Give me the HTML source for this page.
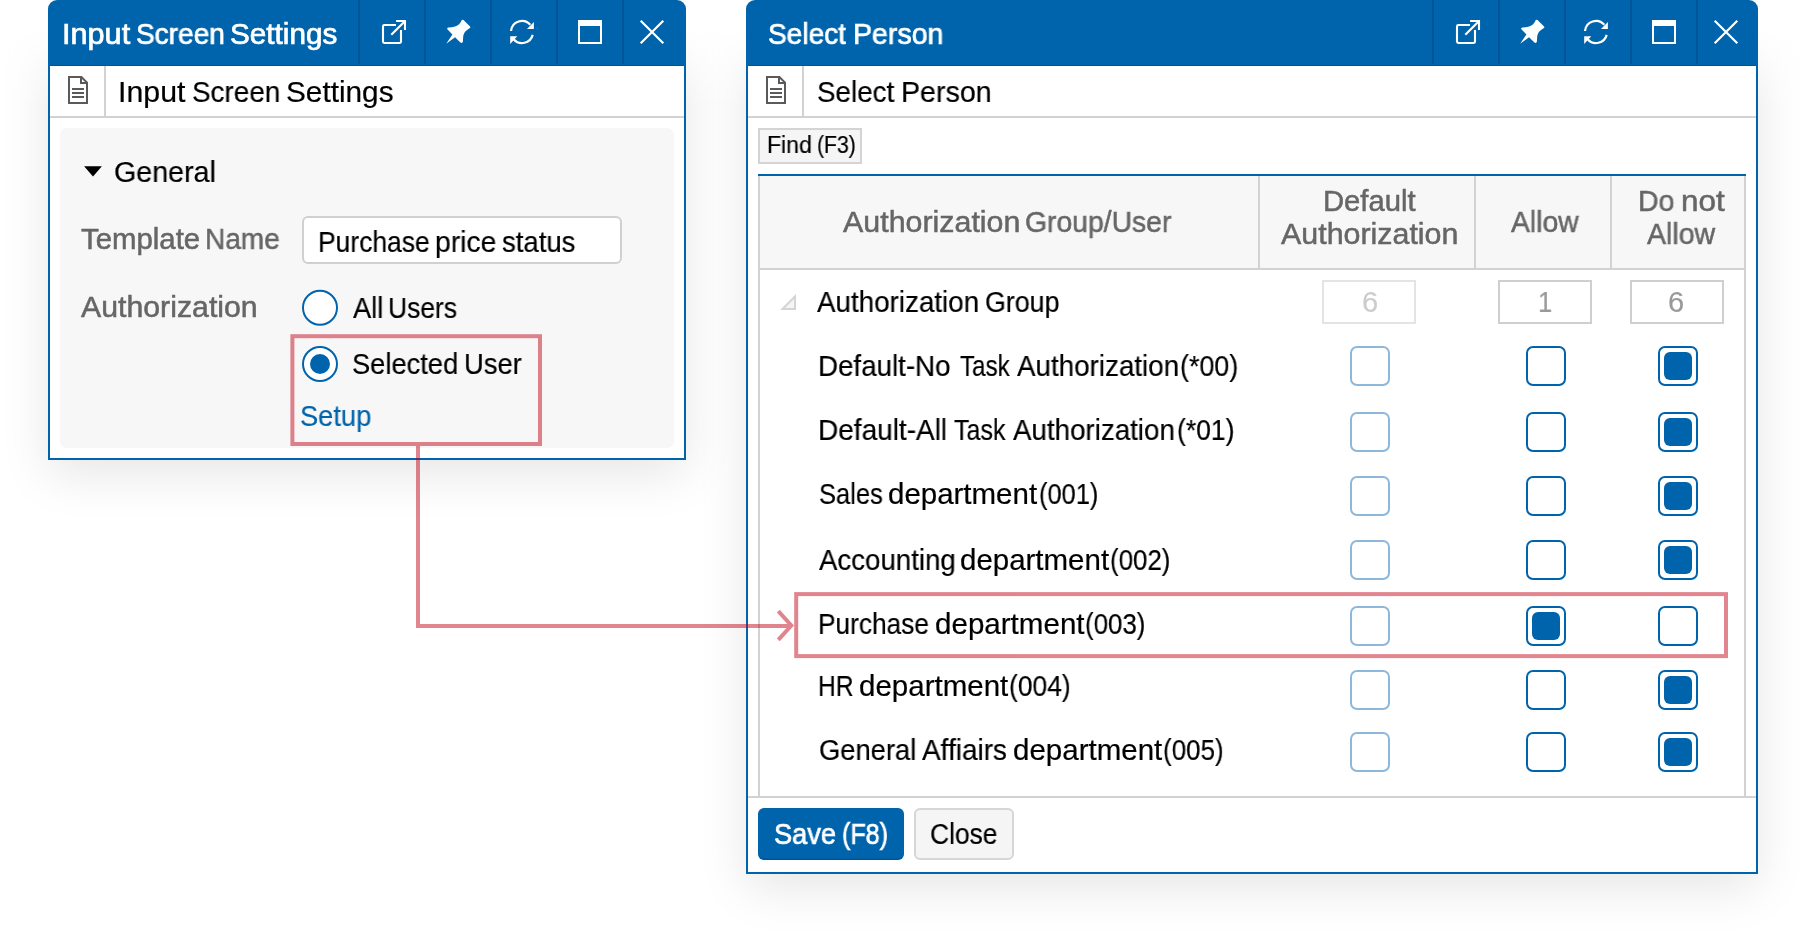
<!DOCTYPE html>
<html lang="en"><head><meta charset="utf-8"><title>Select Person</title>
<style>
html,body{margin:0;padding:0;background:#fff;}
body{width:1808px;height:933px;position:relative;overflow:hidden;font-family:"Liberation Sans", sans-serif;}
.abs,.t,.win,.win>*{position:absolute;}
.t{left:0;white-space:nowrap;}
.t span{position:absolute;top:0;display:block;transform-origin:0 0;will-change:transform;}
.win{background:#fff;border-radius:9px 9px 0 0;box-shadow:0 14px 50px rgba(0,0,0,0.103);}
.frame{left:0;top:60px;right:0;bottom:0;border:2px solid #0064ac;border-top:0;box-sizing:border-box;}
.bar{left:0;top:0;right:0;height:66px;background:#0064ac;border-radius:9px 9px 0 0;box-shadow:inset 0 -1px 0 rgba(0,0,90,0.16);}
.sep{top:0;width:2px;height:64px;background:rgba(0,30,80,0.22);}
.hline{height:2px;background:#d2d2d2;}
.vline{width:2px;background:#d2d2d2;}
svg{position:absolute;left:0;top:0;overflow:visible;}
</style></head><body>

<div class="win" style="left:48px;top:0;width:638px;height:460px;"><div class="bar"></div><div class="frame"></div>
<div class="sep" style="left:310px"></div>
<div class="sep" style="left:376px"></div>
<div class="sep" style="left:442px"></div>
<div class="sep" style="left:508px"></div>
<div class="sep" style="left:574px"></div>
<div class="hline" style="left:2px;right:2px;top:116px;"></div>
<div class="vline" style="left:56px;top:66px;height:50px;"></div>
<div style="left:12px;top:128px;width:614px;height:320px;background:#f7f7f7;border-radius:7px;"></div>
<div style="left:254px;top:216px;width:320px;height:48px;box-sizing:border-box;border:2px solid #d0d0d0;border-radius:6px;background:#fff;"></div>
</div>
<div class="win" style="left:746px;top:0;width:1012px;height:874px;"><div class="bar"></div><div class="frame"></div>
<div class="sep" style="left:686px"></div>
<div class="sep" style="left:752px"></div>
<div class="sep" style="left:818px"></div>
<div class="sep" style="left:884px"></div>
<div class="sep" style="left:950px"></div>
<div class="hline" style="left:2px;right:2px;top:116px;"></div>
<div class="vline" style="left:56px;top:66px;height:50px;"></div>
<div style="left:12px;top:128px;width:104px;height:36px;box-sizing:border-box;border:2px solid #d4d4d4;background:#f5f5f5;"></div>
<div style="left:12px;top:176px;width:988px;height:93px;background:#f7f7f7;"></div>
<div style="left:12px;top:174px;width:988px;height:2px;background:#0064ac;"></div>
<div class="hline" style="left:12px;width:988px;top:268px;"></div>
<div class="vline" style="left:12px;top:176px;height:620px;"></div>
<div class="vline" style="left:998px;top:176px;height:620px;"></div>
<div class="vline" style="left:512px;top:176px;height:92px;"></div>
<div class="vline" style="left:728px;top:176px;height:92px;"></div>
<div class="vline" style="left:864px;top:176px;height:92px;"></div>
<div style="left:576px;top:280px;width:94px;height:44px;box-sizing:border-box;border:2px solid #e4e4e4;background:#fff;"></div>
<div style="left:752px;top:280px;width:94px;height:44px;box-sizing:border-box;border:2px solid #cfcfcf;background:#fff;"></div>
<div style="left:884px;top:280px;width:94px;height:44px;box-sizing:border-box;border:2px solid #cfcfcf;background:#fff;"></div>
<div class="hline" style="left:2px;right:2px;top:796px;"></div>
<div style="left:12px;top:808px;width:146px;height:52px;background:#0064ac;border-radius:6px;box-shadow:inset 0 -1.5px 0 rgba(0,0,40,0.14);"></div>
<div style="left:168px;top:808px;width:100px;height:52px;box-sizing:border-box;border:2px solid #d6d6d6;background:#f5f5f5;border-radius:6px;"></div>
</div>
<div class="abs" style="left:0px;top:0;width:48px;height:112px;background:linear-gradient(to bottom,#fff 0,#fff 28px,rgba(255,255,255,0) 108px);"></div>
<div class="abs" style="left:686px;top:0;width:60px;height:112px;background:linear-gradient(to bottom,#fff 0,#fff 28px,rgba(255,255,255,0) 108px);"></div>
<div class="abs" style="left:1758px;top:0;width:50px;height:112px;background:linear-gradient(to bottom,#fff 0,#fff 28px,rgba(255,255,255,0) 108px);"></div>
<svg width="1808" height="933" viewBox="0 0 1808 933">
<g fill="none" stroke="#fff" stroke-width="2.1"><path d="M396,25 H384.4 a1.4,1.4 0 0 0 -1.4,1.4 V41.6 a1.4,1.4 0 0 0 1.4,1.4 H399.6 a1.4,1.4 0 0 0 1.4,-1.4 V30"/><path d="M391.3,34.7 L404.6,21.4"/><path d="M396.1,21.05 H405 V30"/></g>
<g transform="translate(446,20)"><path fill="#fff" d="M16.6,-0.2 C17.2,-0.4 17.6,0 18,0.4 L23.8,6.2 C24.4,6.8 24.6,7.4 24,8 C22.5,9 20.3,10.4 19.1,11.8 C17.6,13.8 17.2,15.6 17.1,18 L16.9,21.6 C16.8,23 15.4,23.4 14.4,22.6 L9.05,17.2 L0.2,23.7 L6.4,14.5 L1.6,9.6 C0.8,8.8 1.2,7.6 2.5,7.5 L6,7.2 C9,6.9 11,5.9 12.5,4.8 C14,3.6 14.8,2 15.4,0.8 C15.7,0.2 16,-0.1 16.6,-0.2 Z"/></g>
<g transform="translate(522,32)"><g fill="none" stroke="#fff" stroke-width="2.2"><path d="M-11,-1 A11,11 0 0 1 8.3,-7.2"/><path d="M10.7,2.9 A11,11 0 0 1 -8.3,7.2"/></g><path fill="#fff" d="M11.9,-10.1 V-3 H5 Z"/><path fill="#fff" d="M-11.8,11.9 V4.2 H-4.7 Z"/></g>
<g><rect x="579" y="21" width="22" height="22" fill="none" stroke="#fff" stroke-width="2"/><rect x="578" y="20" width="24" height="6" fill="#fff"/></g>
<path d="M640.7,20.7 L663.3,43.3 M663.3,20.7 L640.7,43.3" stroke="#fff" stroke-width="2.2" fill="none"/>
<g fill="none" stroke="#fff" stroke-width="2.1"><path d="M1470,25 H1458.4 a1.4,1.4 0 0 0 -1.4,1.4 V41.6 a1.4,1.4 0 0 0 1.4,1.4 H1473.6 a1.4,1.4 0 0 0 1.4,-1.4 V30"/><path d="M1465.3,34.7 L1478.6,21.4"/><path d="M1470.1,21.05 H1479 V30"/></g>
<g transform="translate(1520,20)"><path fill="#fff" d="M16.6,-0.2 C17.2,-0.4 17.6,0 18,0.4 L23.8,6.2 C24.4,6.8 24.6,7.4 24,8 C22.5,9 20.3,10.4 19.1,11.8 C17.6,13.8 17.2,15.6 17.1,18 L16.9,21.6 C16.8,23 15.4,23.4 14.4,22.6 L9.05,17.2 L0.2,23.7 L6.4,14.5 L1.6,9.6 C0.8,8.8 1.2,7.6 2.5,7.5 L6,7.2 C9,6.9 11,5.9 12.5,4.8 C14,3.6 14.8,2 15.4,0.8 C15.7,0.2 16,-0.1 16.6,-0.2 Z"/></g>
<g transform="translate(1596,32)"><g fill="none" stroke="#fff" stroke-width="2.2"><path d="M-11,-1 A11,11 0 0 1 8.3,-7.2"/><path d="M10.7,2.9 A11,11 0 0 1 -8.3,7.2"/></g><path fill="#fff" d="M11.9,-10.1 V-3 H5 Z"/><path fill="#fff" d="M-11.8,11.9 V4.2 H-4.7 Z"/></g>
<g><rect x="1653" y="21" width="22" height="22" fill="none" stroke="#fff" stroke-width="2"/><rect x="1652" y="20" width="24" height="6" fill="#fff"/></g>
<path d="M1714.7,20.7 L1737.3,43.3 M1737.3,20.7 L1714.7,43.3" stroke="#fff" stroke-width="2.2" fill="none"/>
<g transform="translate(68,76)" fill="none" stroke="#5a5a5a" stroke-width="2"><path d="M1,1 H13.4 L19,6.6 V27 H1 Z"/><path d="M13,1 V7 H19"/><path d="M4,13 H16 M4,17 H16 M4,21 H16"/></g>
<g transform="translate(766,76)" fill="none" stroke="#5a5a5a" stroke-width="2"><path d="M1,1 H13.4 L19,6.6 V27 H1 Z"/><path d="M13,1 V7 H19"/><path d="M4,13 H16 M4,17 H16 M4,21 H16"/></g>
<path d="M84.1,166.3 H101.9 L93,176.6 Z" fill="#000"/>
<path d="M795,296.5 V309 H782.5 Z" fill="#f5f5f5" stroke="#d4d4d4" stroke-width="2"/>
<circle cx="320" cy="307.75" r="17" fill="#fff" stroke="#0064ac" stroke-width="2"/>
<circle cx="320" cy="364" r="17" fill="#fff" stroke="#0064ac" stroke-width="2"/><circle cx="320" cy="364" r="10" fill="#0064ac"/>
<rect x="1351" y="347" width="38" height="38" rx="6" fill="#fff" stroke="#8db8dc" stroke-width="2"/>
<rect x="1527" y="347" width="38" height="38" rx="6" fill="#fff" stroke="#0064ac" stroke-width="2"/>
<rect x="1659" y="347" width="38" height="38" rx="6" fill="#fff" stroke="#0064ac" stroke-width="2"/><rect x="1664" y="352" width="28" height="28" rx="6" fill="#0064ac"/>
<rect x="1351" y="413" width="38" height="38" rx="6" fill="#fff" stroke="#8db8dc" stroke-width="2"/>
<rect x="1527" y="413" width="38" height="38" rx="6" fill="#fff" stroke="#0064ac" stroke-width="2"/>
<rect x="1659" y="413" width="38" height="38" rx="6" fill="#fff" stroke="#0064ac" stroke-width="2"/><rect x="1664" y="418" width="28" height="28" rx="6" fill="#0064ac"/>
<rect x="1351" y="477" width="38" height="38" rx="6" fill="#fff" stroke="#8db8dc" stroke-width="2"/>
<rect x="1527" y="477" width="38" height="38" rx="6" fill="#fff" stroke="#0064ac" stroke-width="2"/>
<rect x="1659" y="477" width="38" height="38" rx="6" fill="#fff" stroke="#0064ac" stroke-width="2"/><rect x="1664" y="482" width="28" height="28" rx="6" fill="#0064ac"/>
<rect x="1351" y="541" width="38" height="38" rx="6" fill="#fff" stroke="#8db8dc" stroke-width="2"/>
<rect x="1527" y="541" width="38" height="38" rx="6" fill="#fff" stroke="#0064ac" stroke-width="2"/>
<rect x="1659" y="541" width="38" height="38" rx="6" fill="#fff" stroke="#0064ac" stroke-width="2"/><rect x="1664" y="546" width="28" height="28" rx="6" fill="#0064ac"/>
<rect x="1351" y="607" width="38" height="38" rx="6" fill="#fff" stroke="#8db8dc" stroke-width="2"/>
<rect x="1527" y="607" width="38" height="38" rx="6" fill="#fff" stroke="#0064ac" stroke-width="2"/><rect x="1532" y="612" width="28" height="28" rx="6" fill="#0064ac"/>
<rect x="1659" y="607" width="38" height="38" rx="6" fill="#fff" stroke="#0064ac" stroke-width="2"/>
<rect x="1351" y="671" width="38" height="38" rx="6" fill="#fff" stroke="#8db8dc" stroke-width="2"/>
<rect x="1527" y="671" width="38" height="38" rx="6" fill="#fff" stroke="#0064ac" stroke-width="2"/>
<rect x="1659" y="671" width="38" height="38" rx="6" fill="#fff" stroke="#0064ac" stroke-width="2"/><rect x="1664" y="676" width="28" height="28" rx="6" fill="#0064ac"/>
<rect x="1351" y="733" width="38" height="38" rx="6" fill="#fff" stroke="#8db8dc" stroke-width="2"/>
<rect x="1527" y="733" width="38" height="38" rx="6" fill="#fff" stroke="#0064ac" stroke-width="2"/>
<rect x="1659" y="733" width="38" height="38" rx="6" fill="#fff" stroke="#0064ac" stroke-width="2"/><rect x="1664" y="738" width="28" height="28" rx="6" fill="#0064ac"/>
<g fill="none" stroke="rgb(192,0,20)" stroke-width="4" opacity="0.48"><rect x="292.4" y="336.2" width="247.6" height="107.8"/><rect x="796.2" y="594.1" width="929.8" height="62"/><path d="M418,446 V625.9 H789"/><path d="M778.3,611.2 L791.3,625.5 L778.3,639.8" stroke-linejoin="miter"/></g>
</svg>
<div class="t" style="top:20.25px;font-size:29px;line-height:29px;color:#fff;-webkit-text-stroke:0.7px #fff;"><span style="left:61.89px;transform:scaleX(1.0570)">Input</span> <span style="left:136.03px;transform:scaleX(0.9665)">Screen</span> <span style="left:230.23px;transform:scaleX(1.0239)">Settings</span></div>
<div class="t" style="top:77.75px;font-size:29px;line-height:29px;color:#000;-webkit-text-stroke:0.2px #000;"><span style="left:118.41px;transform:scaleX(1.0450)">Input</span> <span style="left:192.29px;transform:scaleX(0.9609)">Screen</span> <span style="left:285.97px;transform:scaleX(1.0263)">Settings</span></div>
<div class="t" style="top:157.50px;font-size:29px;line-height:29px;color:#000;-webkit-text-stroke:0.2px #000;"><span style="left:114.01px;transform:scaleX(0.9878)">General</span></div>
<div class="t" style="top:225.25px;font-size:29px;line-height:29px;color:#666;-webkit-text-stroke:0.5px #666;"><span style="left:80.75px;transform:scaleX(1.0125)">Template</span> <span style="left:205.07px;transform:scaleX(0.9666)">Name</span></div>
<div class="t" style="top:227.75px;font-size:29px;line-height:29px;color:#000;-webkit-text-stroke:0.2px #000;"><span style="left:317.68px;transform:scaleX(0.9109)">Purchase</span> <span style="left:435.27px;transform:scaleX(0.9757)">price</span> <span style="left:502.00px;transform:scaleX(0.9496)">status</span></div>
<div class="t" style="top:293.25px;font-size:29px;line-height:29px;color:#666;-webkit-text-stroke:0.5px #666;"><span style="left:80.75px;transform:scaleX(1.0438)">Authorization</span></div>
<div class="t" style="top:293.75px;font-size:29px;line-height:29px;color:#000;-webkit-text-stroke:0.2px #000;"><span style="left:353.00px;transform:scaleX(0.9420)">All</span> <span style="left:388.18px;transform:scaleX(0.9115)">Users</span></div>
<div class="t" style="top:349.50px;font-size:29px;line-height:29px;color:#000;-webkit-text-stroke:0.2px #000;"><span style="left:352.31px;transform:scaleX(0.9415)">Selected</span> <span style="left:463.86px;transform:scaleX(0.9442)">User</span></div>
<div class="t" style="top:401.50px;font-size:29px;line-height:29px;color:#0064ac;-webkit-text-stroke:0.2px #0064ac;"><span style="left:300.31px;transform:scaleX(0.9402)">Setup</span></div>
<div class="t" style="top:20.25px;font-size:29px;line-height:29px;color:#fff;-webkit-text-stroke:0.7px #fff;"><span style="left:768.28px;transform:scaleX(0.9680)">Select</span> <span style="left:852.53px;transform:scaleX(0.9830)">Person</span></div>
<div class="t" style="top:77.75px;font-size:29px;line-height:29px;color:#000;-webkit-text-stroke:0.2px #000;"><span style="left:816.54px;transform:scaleX(0.9586)">Select</span> <span style="left:900.53px;transform:scaleX(0.9858)">Person</span></div>
<div class="t" style="top:134.41px;font-size:23.5px;line-height:23.5px;color:#000;-webkit-text-stroke:0.2px #000;"><span style="left:766.72px;transform:scaleX(0.9806)">Find</span> <span style="left:817.00px;transform:scaleX(0.8994)">(F3)</span></div>
<div class="t" style="top:207.75px;font-size:29px;line-height:29px;color:#666;-webkit-text-stroke:0.5px #666;"><span style="left:842.50px;transform:scaleX(1.0482)">Authorization</span> <span style="left:1025.27px;transform:scaleX(0.9767)">Group/User</span></div>
<div class="t" style="top:187.25px;font-size:29px;line-height:29px;color:#666;-webkit-text-stroke:0.5px #666;"><span style="left:1322.99px;transform:scaleX(1.0075)">Default</span></div>
<div class="t" style="top:219.50px;font-size:29px;line-height:29px;color:#666;-webkit-text-stroke:0.5px #666;"><span style="left:1281.25px;transform:scaleX(1.0482)">Authorization</span></div>
<div class="t" style="top:207.75px;font-size:29px;line-height:29px;color:#666;-webkit-text-stroke:0.5px #666;"><span style="left:1510.50px;transform:scaleX(0.9772)">Allow</span></div>
<div class="t" style="top:187.25px;font-size:29px;line-height:29px;color:#666;-webkit-text-stroke:0.5px #666;"><span style="left:1637.79px;transform:scaleX(0.9796)">Do</span> <span style="left:1680.67px;transform:scaleX(1.0826)">not</span></div>
<div class="t" style="top:219.50px;font-size:29px;line-height:29px;color:#666;-webkit-text-stroke:0.5px #666;"><span style="left:1646.75px;transform:scaleX(0.9843)">Allow</span></div>
<div class="t" style="top:287.50px;font-size:29px;line-height:29px;color:#000;-webkit-text-stroke:0.2px #000;"><span style="left:816.50px;transform:scaleX(0.9575)">Authorization</span> <span style="left:984.83px;transform:scaleX(0.9239)">Group</span></div>
<div class="t" style="top:287.50px;font-size:29px;line-height:29px;color:#ccc;-webkit-text-stroke:0.2px #ccc;"><span style="left:1361.50px;transform:scaleX(1.0000)">6</span></div>
<div class="t" style="top:287.50px;font-size:29px;line-height:29px;color:#999;-webkit-text-stroke:0.2px #999;"><span style="left:1537.73px;transform:scaleX(0.8846)">1</span></div>
<div class="t" style="top:287.50px;font-size:29px;line-height:29px;color:#999;-webkit-text-stroke:0.2px #999;"><span style="left:1667.50px;transform:scaleX(1.0000)">6</span></div>
<div class="t" style="top:351.75px;font-size:29px;line-height:29px;color:#000;-webkit-text-stroke:0.2px #000;"><span style="left:818.09px;transform:scaleX(0.9558)">Default-No</span> <span style="left:959.50px;transform:scaleX(0.8316)">Task</span> <span style="left:1016.50px;transform:scaleX(0.9575)">Authorization</span><span style="left:1180.32px;transform:scaleX(0.9261)">(*00)</span></div>
<div class="t" style="top:415.75px;font-size:29px;line-height:29px;color:#000;-webkit-text-stroke:0.2px #000;"><span style="left:818.07px;transform:scaleX(0.9649)">Default-All</span> <span style="left:953.75px;transform:scaleX(0.8607)">Task</span> <span style="left:1013.00px;transform:scaleX(0.9560)">Authorization</span><span style="left:1176.59px;transform:scaleX(0.9136)">(*01)</span></div>
<div class="t" style="top:479.50px;font-size:29px;line-height:29px;color:#000;-webkit-text-stroke:0.2px #000;"><span style="left:818.62px;transform:scaleX(0.8798)">Sales</span> <span style="left:888.48px;transform:scaleX(1.0162)">department</span><span style="left:1039.12px;transform:scaleX(0.8764)">(001)</span></div>
<div class="t" style="top:545.75px;font-size:29px;line-height:29px;color:#000;-webkit-text-stroke:0.2px #000;"><span style="left:818.75px;transform:scaleX(0.9536)">Accounting</span> <span style="left:960.23px;transform:scaleX(1.0162)">department</span><span style="left:1110.36px;transform:scaleX(0.8917)">(002)</span></div>
<div class="t" style="top:609.50px;font-size:29px;line-height:29px;color:#000;-webkit-text-stroke:0.2px #000;"><span style="left:818.19px;transform:scaleX(0.9046)">Purchase</span> <span style="left:934.73px;transform:scaleX(1.0196)">department</span><span style="left:1085.36px;transform:scaleX(0.8917)">(003)</span></div>
<div class="t" style="top:671.50px;font-size:29px;line-height:29px;color:#000;-webkit-text-stroke:0.2px #000;"><span style="left:818.31px;transform:scaleX(0.8474)">HR</span> <span style="left:858.98px;transform:scaleX(1.0179)">department</span><span style="left:1009.09px;transform:scaleX(0.9109)">(004)</span></div>
<div class="t" style="top:735.75px;font-size:29px;line-height:29px;color:#000;-webkit-text-stroke:0.2px #000;"><span style="left:818.56px;transform:scaleX(0.9431)">General</span> <span style="left:921.75px;transform:scaleX(0.9646)">Affiairs</span> <span style="left:1012.73px;transform:scaleX(1.0179)">department</span><span style="left:1162.85px;transform:scaleX(0.8956)">(005)</span></div>
<div class="t" style="top:819.50px;font-size:29px;line-height:29px;color:#fff;-webkit-text-stroke:0.7px #fff;"><span style="left:774.06px;transform:scaleX(0.9379)">Save</span> <span style="left:842.38px;transform:scaleX(0.8663)">(F8)</span></div>
<div class="t" style="top:819.50px;font-size:29px;line-height:29px;color:#000;-webkit-text-stroke:0.2px #000;"><span style="left:930.34px;transform:scaleX(0.9095)">Close</span></div>
</body></html>
